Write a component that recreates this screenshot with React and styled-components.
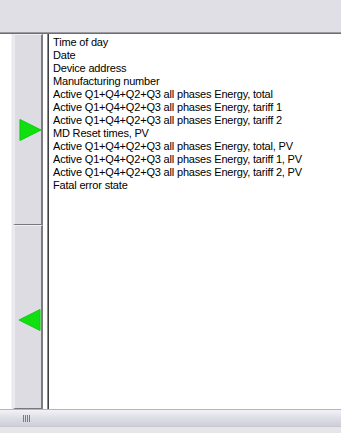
import React from "react";
import styled, { createGlobalStyle } from "styled-components";

const Global = createGlobalStyle`
  html, body { margin: 0; padding: 0; background: #ffffff; }
  body { font-family: "Liberation Sans", Arial, sans-serif; }
`;

const Frame = styled.div`
  width: 341px;
  height: 433px;
  display: flex;
  flex-direction: column;
  overflow: hidden;
  background: #ffffff;
`;

const TopBar = styled.div`
  height: 32px;
  background: #e0dfe5;
  border-bottom: 1px solid #9a9aa0;
  box-shadow: 0 1px 0 #6e6e72;
  flex-shrink: 0;
`;

const Body = styled.div`
  flex: 1;
  display: flex;
  min-height: 0;
  padding-top: 1px;
`;

const Gutter = styled.div`
  width: 11px;
  border-right: 1px solid #f4f4f6;
  background: #ffffff;
`;

const ButtonColumn = styled.div`
  width: 30px;
  display: flex;
  flex-direction: column;
  border-left: 1px solid #e8e8ec;
`;

const MoveButton = styled.div`
  height: ${(p) => (p.$height ? `${p.$height}px` : "auto")};
  flex: ${(p) => (p.$height ? "0 0 auto" : "1")};
  display: flex;
  align-items: center;
  justify-content: center;
  padding-top: ${(p) => p.$shift || 0}px;
  padding-left: 4px;
  background: #dcdce2;
  border-left: 2px solid #ebebef;
  border-top: 1px solid #f0f0f2;
  border-right: 2px solid #7c7c80;
  border-bottom: 1px solid #78787c;
  box-sizing: border-box;
`;

const Spacer = styled.div`
  width: 4px;
  background: #ffffff;
`;

const ListBox = styled.div`
  flex: 1;
  background: #ffffff;
  border-left: 1px solid #8a8a8e;
  box-shadow: inset 1px 0 0 #404044;
  padding: 2px 0 0 5px;
  font-size: 11px;
  letter-spacing: -0.18px;
  line-height: 13px;
  color: #000000;
  white-space: nowrap;
`;

const Item = styled.div`
  height: 13px;
`;

const ScrollBar = styled.div`
  height: 16px;
  flex-shrink: 0;
  border-top: 1px solid #b4b4ba;
  border-bottom: 1px solid #c6c6cc;
  background: linear-gradient(#f2f2f6, #dcdce6 55%, #cfcfda);
  display: flex;
  align-items: center;
  padding-left: 23px;
`;

const Grip = styled.div`
  display: flex;
  gap: 1px;
`;

const GripLine = styled.span`
  width: 1px;
  height: 7px;
  background: #7a7a88;
`;

const BottomStrip = styled.div`
  height: 6px;
  flex-shrink: 0;
  background: #e6e6ea;
`;

const Arrow = ({ left }) => (
  <svg width="23" height="24" viewBox="0 0 23 24">
    <polygon
      points={left ? "22,1 0,12 22,23" : "1,1 23,12 1,23"}
      fill="#10e010"
      stroke="#0cc80c"
      strokeWidth="1"
    />
  </svg>
);

const items = [
  "Time of day",
  "Date",
  "Device address",
  "Manufacturing number",
  "Active Q1+Q4+Q2+Q3 all phases Energy, total",
  "Active Q1+Q4+Q2+Q3 all phases Energy, tariff 1",
  "Active Q1+Q4+Q2+Q3 all phases Energy, tariff 2",
  "MD Reset times, PV",
  "Active Q1+Q4+Q2+Q3 all phases Energy, total, PV",
  "Active Q1+Q4+Q2+Q3 all phases Energy, tariff 1, PV",
  "Active Q1+Q4+Q2+Q3 all phases Energy, tariff 2, PV",
  "Fatal error state",
];

const App = () => (
  <Frame>
    <Global />
    <TopBar />
    <Body>
      <Gutter />
      <ButtonColumn>
        <MoveButton $height={191}>
          <Arrow />
        </MoveButton>
        <MoveButton $shift={5}>
          <Arrow left />
        </MoveButton>
      </ButtonColumn>
      <Spacer />
      <ListBox>
        {items.map((text, i) => (
          <Item key={i}>{text}</Item>
        ))}
      </ListBox>
    </Body>
    <ScrollBar>
      <Grip>
        {[0, 1, 2, 3].map((i) => (
          <GripLine key={i} />
        ))}
      </Grip>
    </ScrollBar>
    <BottomStrip />
  </Frame>
);

export default App;
